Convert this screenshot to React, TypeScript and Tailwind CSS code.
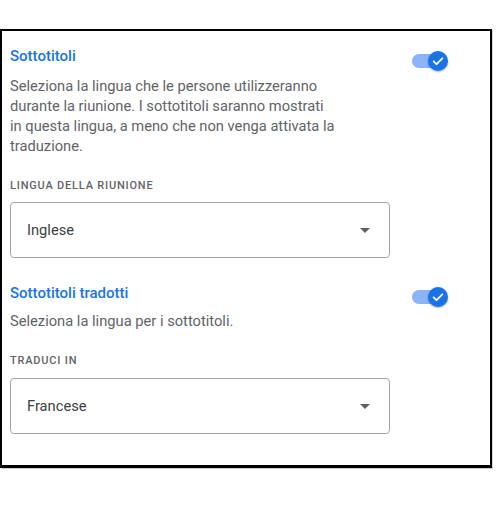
const font = { fontFamily: "Roboto, 'Noto Sans', Arial, sans-serif" };

function Toggle({ className = "" }: { className?: string }) {
  return (
    <div className={`relative h-5 w-9 shrink-0 ${className}`}>
      <div className="absolute left-0 top-[3px] h-[14px] w-[30px] rounded-full bg-[#8ab4f8]" />
      <div className="absolute right-0 top-0 flex h-5 w-5 items-center justify-center rounded-full bg-[#1a73e8] shadow-[0_1px_2px_rgba(0,0,0,0.3)]">
        <svg width="14" height="14" viewBox="0 0 24 24" fill="none">
          <path d="M4.5 12.5l5 5 10-10" stroke="white" strokeWidth="3" strokeLinecap="round" strokeLinejoin="round" />
        </svg>
      </div>
    </div>
  );
}

function Select({ value }: { value: string }) {
  return (
    <div className="flex h-14 w-[380px] items-center justify-between rounded-[4px] border border-[#a0a4a8] pl-4 pr-[19px]">
      <span className="text-[14.7px] leading-5 text-[#3c4043]">{value}</span>
      <svg width="10" height="5" viewBox="0 0 10 5">
        <path d="M0 0h10L5 5z" fill="#5f6368" />
      </svg>
    </div>
  );
}

export default function App() {
  return (
    <div className="min-h-[506px] w-[500px] bg-white pt-[29px]" style={font}>
      <div className="flex h-[439px] w-[492px] flex-col border-2 border-b-[3px] border-black pl-2 pr-[42px] pt-[15px] shadow-[1px_1px_0_#cfcfcf]">
        {/* Sottotitoli */}
        <div className="flex h-5 items-start justify-between">
          <h2 className="text-[15px] font-medium leading-5 text-[#1a73e8]">Sottotitoli</h2>
          <Toggle className="mt-[5px]" />
        </div>
        <p className="mt-[10px] w-[328px] text-[14.7px] leading-5 text-[#5f6368]">
          Seleziona la lingua che le persone utilizzeranno durante la riunione. I sottotitoli saranno mostrati in questa lingua, a meno che non venga attivata la traduzione.
        </p>
        <p className="mt-[22px] text-[11px] font-medium uppercase leading-4 tracking-[0.8px] text-[#5f6368]">
          Lingua della riunione
        </p>
        <div className="mt-2">
          <Select value="Inglese" />
        </div>

        {/* Sottotitoli tradotti */}
        <div className="mt-[25px] flex h-5 items-start justify-between">
          <h2 className="text-[15px] font-medium leading-5 text-[#1a73e8]">Sottotitoli tradotti</h2>
          <Toggle className="mt-1" />
        </div>
        <p className="mt-2 text-[14.7px] leading-5 text-[#5f6368]">Seleziona la lingua per i sottotitoli.</p>
        <p className="mt-[22px] text-[11px] font-medium uppercase leading-4 tracking-[0.8px] text-[#5f6368]">
          Traduci in
        </p>
        <div className="mt-[9px]">
          <Select value="Francese" />
        </div>
      </div>
    </div>
  );
}
